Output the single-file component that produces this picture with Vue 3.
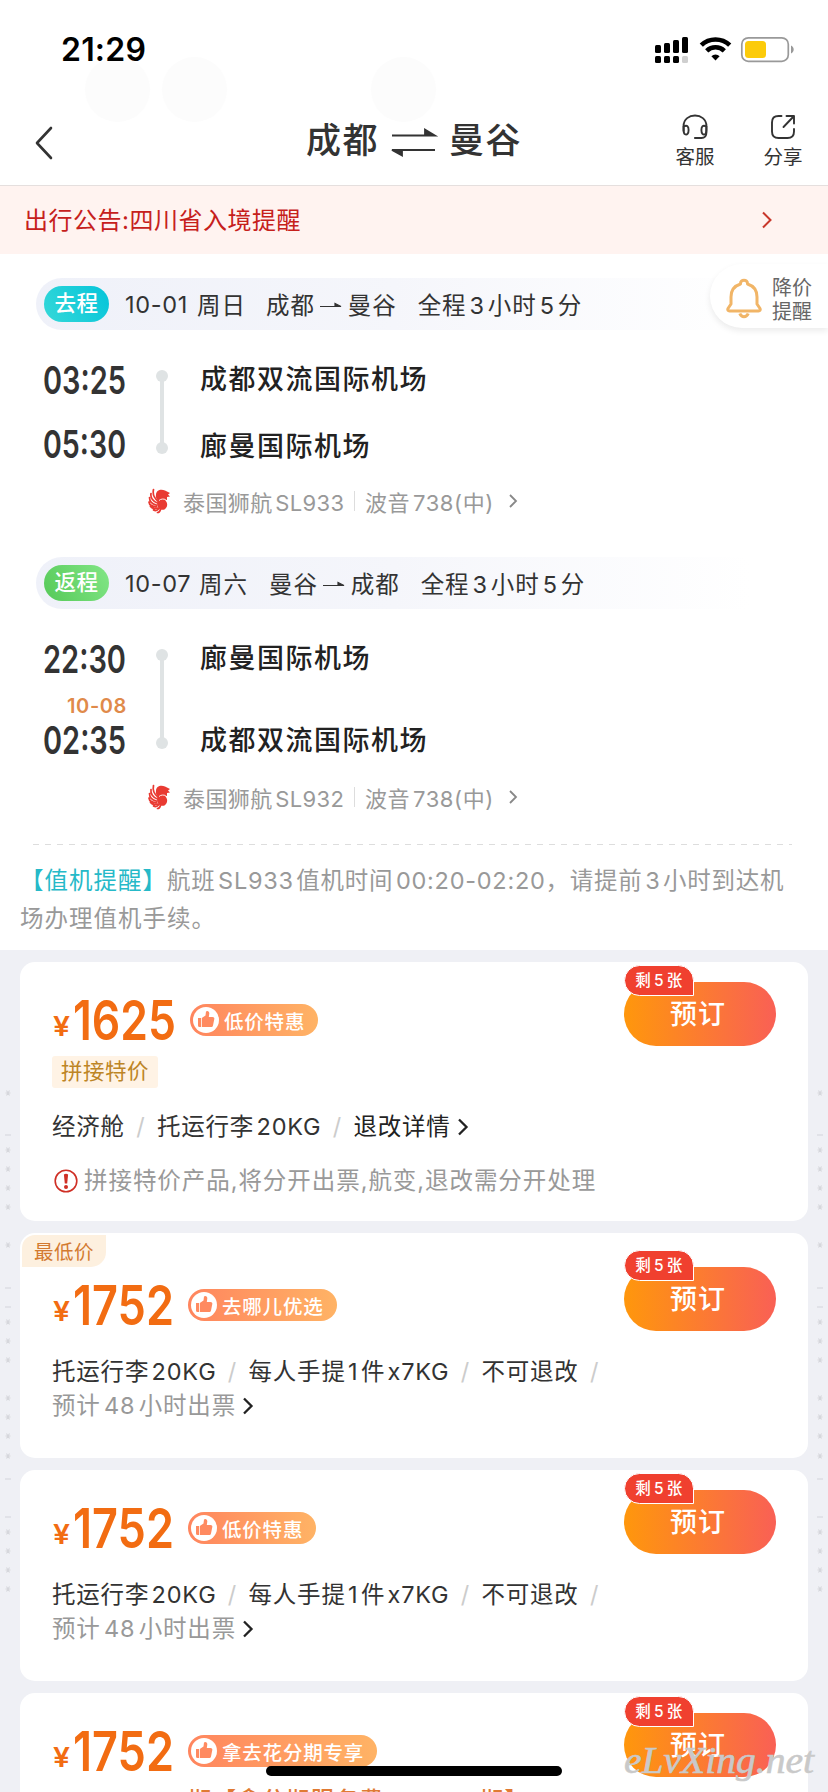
<script setup>
const legs = [
  {
    kind: 'go', label: '去程', date: '10-01', day: '周日', from: '成都', to: '曼谷', total: '全程 3 小时 5 分',
    dep: '03:25', arr: '05:30', plus: '', depPort: '成都双流国际机场', arrPort: '廊曼国际机场', flight: '泰国狮航 SL933',
  },
  {
    kind: 'back', label: '返程', date: '10-07', day: '周六', from: '曼谷', to: '成都', total: '全程 3 小时 5 分',
    dep: '22:30', arr: '02:35', plus: '10-08', depPort: '廊曼国际机场', arrPort: '成都双流国际机场', flight: '泰国狮航 SL932',
  },
]
const fares = [
  { kind: 'split', price: '1625', tag: '低价特惠', w: 103 },
  { kind: 'lowest', price: '1752', tag: '去哪儿优选', w: 101 },
  { kind: 'plain', price: '1752', tag: '低价特惠', w: 101 },
  { kind: 'last', price: '1752', tag: '拿去花分期专享', w: 101 },
]
const stars = [1093, 1150, 1169, 1188, 1207, 1245, 1322, 1341, 1360, 1398, 1417, 1436, 1456, 1532, 1551, 1570, 1589]
const dashes = [1135, 1288, 1307, 1479, 1517]
</script>

<template>
  <div class="screen">
    <i class="bubble b1"></i><i class="bubble b2"></i><i class="bubble b3"></i>
    <div class="status">
      <span class="clock">21:29</span>
      <svg class="status-icons" width="140" height="28" viewBox="0 0 140 28">
        <g fill="#000">
          <rect x="0" y="9" width="6" height="8" rx="1.5" /><rect x="9" y="7" width="6" height="10" rx="1.5" />
          <rect x="18" y="4" width="6" height="13" rx="1.5" /><rect x="27" y="1" width="6" height="16" rx="1.5" />
          <rect x="0" y="20" width="6" height="7" rx="1.5" /><rect x="9" y="20" width="6" height="7" rx="1.5" />
          <rect x="18" y="20" width="6" height="7" rx="1.5" />
        </g>
        <rect x="27" y="20" width="6" height="7" rx="1.5" fill="#cfcfcf" />
        <g fill="none" stroke="#000" stroke-width="4.6">
          <path d="M46.3 9.2a20.4 20.4 0 0 1 28.4 0" /><path d="M51.7 14.8a12.7 12.7 0 0 1 17.6 0" />
        </g>
        <path d="M56.4 20.2a5.8 5.8 0 0 1 8.2 0L60.5 24.6z" fill="#000" />
        <rect x="86.8" y="1.8" width="46.5" height="23.5" rx="6.5" fill="#fff" stroke="#999" stroke-width="1.7" />
        <rect x="90" y="5" width="21" height="17" rx="3.5" fill="#fccb0a" />
        <path d="M136 9.5c3.6 1.4 3.6 6.600 0 8z" fill="#999" />
      </svg>
    </div>
    <header class="nav">
      <svg class="back-icon" width="18" height="34" viewBox="0 0 18 34"><path d="M16 2 2 17l14 15" fill="none" stroke="#333" stroke-width="2.6" stroke-linecap="round" stroke-linejoin="round" /></svg>
      <h1 class="title">
        <span>成都</span>
        <svg width="46" height="30" viewBox="0 0 46 30"><path d="M1 8.500H44L34 2.500v6M44 23H1l10 5.500V23" fill="#333" stroke="#333" stroke-width="1.800" /></svg>
        <span>曼谷</span>
      </h1>
      <div class="action">
        <svg width="28" height="28" viewBox="0 0 28 28" fill="none" stroke="#333" stroke-width="1.9" stroke-linecap="round">
          <path d="M2.600 18V13C2.600-1 25.400-1 25.400 13V19.500c0 3.500-2 5.500-5 5.500h-6.500" />
          <path d="M2.600 13.500c3.600-1.800 5 0 5 3.500s-1.500 5.500-4 4c-1-1-1-2-1-4zM25.400 13.500c-3.600-1.800-5 0-5 3.500s1.500 5.500 4 4c1-1 1-2 1-4z" />
        </svg>
        <span>客服</span>
      </div>
      <div class="action share">
        <svg width="28" height="28" viewBox="0 0 28 28" fill="none" stroke="#333" stroke-width="1.900" stroke-linecap="round" stroke-linejoin="round">
          <path d="M12.500 3H9.500Q3 3 3 9.500v9Q3 25 9.500 25h9Q25 25 25 18.500V16M17.500 3H25v7.500M25 3 14.500 14" />
        </svg>
        <span>分享</span>
      </div>
    </header>
    <div class="notice">
      <span>出行公告:四川省入境提醒</span>
      <svg width="12" height="18" viewBox="0 0 12 18"><path d="m2 1.500 7.500 7.500L2 16.500" fill="none" stroke="#c8372b" stroke-width="2" /></svg>
    </div>

    <main class="trip">
      <aside class="alert">
        <svg width="36" height="40" viewBox="0 0 36 40" fill="none" stroke="#f1b567" stroke-width="3" stroke-linejoin="round">
          <path d="M14.500 6C14 1 22 1 21.500 6 28 8 31 13 31 19v7l3 4.500c.7 1.500 0 2.500-1.500 2.500h-29C2 33 1.300 32 2 30.500L5 26v-7c0-6 3-11 9.500-13z" />
          <path d="M13.800 35.500c1.500 4.200 6.900 4.200 8.400 0" />
        </svg>
        <div>降价<br />提醒</div>
      </aside>
      <section v-for="leg in legs" :key="leg.kind" class="leg" :class="leg.kind">
        <div class="leg-bar">
          <span class="badge">{{ leg.label }}</span>
          <span class="date">{{ leg.date }}</span>
          <span class="day">{{ leg.day }}</span>
          <span class="city">{{ leg.from }}</span>
          <svg width="24" height="10" viewBox="0 0 24 10"><path d="M1 7.500H22L16 4.500v3" fill="#333" stroke="#333" stroke-width="1.200" /></svg>
          <span class="city">{{ leg.to }}</span>
          <span class="total">{{ leg.total }}</span>
        </div>
        <div class="route">
          <div class="times">
            <svg width="88" height="46"><text class="time" x="0" y="37" textLength="83" lengthAdjust="spacingAndGlyphs">{{ leg.dep }}</text></svg>
            <span v-if="leg.plus" class="plus">{{ leg.plus }}</span>
            <svg width="88" height="46"><text class="time" x="0" y="37" textLength="83" lengthAdjust="spacingAndGlyphs">{{ leg.arr }}</text></svg>
          </div>
          <div class="track"><i></i><i></i></div>
          <div class="ports"><span>{{ leg.depPort }}</span><span>{{ leg.arrPort }}</span></div>
        </div>
        <div class="plane">
          <svg width="24" height="26" viewBox="0 0 24 26">
            <g fill="none" stroke="#e93a32" stroke-width="1.700" stroke-linecap="round">
              <path d="M5.500 1.500C4.500 6 6 10 10 13M3 5.500c-.8 4 2 8 6.500 9.500M1.500 9.500C1.500 13 4 16 8.500 17M1 14c.5 3 3.500 4.800 7.500 4.500M2.500 18.500c1.500 2 4 2.500 7 1.500M5.500 22c1.800 1 4 .5 5.500-1.500M9.500 24.500c1.500 0 2.500-1 3-3" />
            </g>
            <path d="M8 7C8 2 13 .5 17 2.500l5 2.500L20 6.500l2 2-3 .5v3l-2.500-.5c3 2.500 3.500 6 1.500 8.500-2 3-6 2-8-.5C8 16 10 14 9.500 12 8 10 7.500 9 8 7z" fill="#e93a32" />
            <path d="M11 12.500c2-2 5-1.500 6.500-1M15.500 22l-1 3" fill="none" stroke="#fff" stroke-width=".9" />
          </svg>
          <span class="flight">{{ leg.flight }}</span>
          <i class="sep"></i>
          <span class="model">波音 738(中)</span>
          <svg width="12" height="16" viewBox="0 0 12 16"><path d="m2 2 6 6-6 6" fill="none" stroke="#888" stroke-width="1.800" /></svg>
        </div>
      </section>
      <div class="rule"></div>
      <p class="checkin"><b>【值机提醒】</b><span>航班 SL933 值机时间 00:20-02:20，请提前 3 小时到达机</span><br />场办理值机手续。</p>
    </main>

    <div class="list">
      <svg class="marks" width="828" height="1792" viewBox="0 0 828 1792" stroke="#d6d7dc" stroke-width="1.100">
        <g v-for="x in [8, 820]" :key="x">
          <path v-for="y in stars" :key="y" :d="`M${x - 2.500} ${y}h5M${x - 1.500} ${y - 2.500}l3 5M${x + 1.500} ${y - 2.500}l-3 5`" />
          <path v-for="y in dashes" :key="y" :d="`M${x - 3} ${y}h6`" />
        </g>
      </svg>
      <article v-for="(f, n) in fares" :key="n" class="card" :class="f.kind">
        <span v-if="f.kind === 'lowest'" class="ribbon">最低价</span>
        <div class="top">
          <svg class="yen" width="20" height="44"><text x="1" y="38" textLength="17" lengthAdjust="spacingAndGlyphs">¥</text></svg>
          <svg class="amount" :width="f.w + 6" height="64"><text class="price" x="1" y="52" :textLength="f.w" lengthAdjust="spacingAndGlyphs">{{ f.price }}</text></svg>
          <span class="tag">
            <svg width="26" height="26" viewBox="0 0 26 26"><circle cx="13" cy="13" r="13" fill="#fff" /><path d="M5 11h3v9H6.500Q5 20 5 18.500zM8.800 11l3.700-2.500L13 4.500c1.500-1.500 3.500 0 3.300 2L15.800 10h3.700c1.500 0 2 1 1.800 2l-1.300 6.500c-.2 1-1 1.500-2 1.500H8.800z" fill="#ff8a60" /></svg>
            {{ f.tag }}
          </span>
        </div>
        <div class="book">预订<em>剩 5 张</em></div>
        <template v-if="f.kind === 'split'">
          <span class="split-tag">拼接特价</span>
          <div class="row first">
            <span>经济舱</span><i>/</i><span>托运行李 20KG</span><i>/</i><span class="strong">退改详情</span>
            <svg width="12" height="18" viewBox="0 0 12 18"><path d="m2 1.500 7.500 7.500L2 16.500" fill="none" stroke="#222" stroke-width="2.300" /></svg>
          </div>
          <div class="row warn">
            <svg width="24" height="24" viewBox="0 0 24 24"><circle cx="12" cy="12" r="10.800" fill="none" stroke="#cf2f25" stroke-width="1.600" /><path d="M9.900 5.500q2.100-1.500 4.200 0L13.200 14.500h-2.400z" fill="#cf2f25" /><circle cx="12" cy="18" r="2" fill="#cf2f25" /></svg>
            <span>拼接特价产品,将分开出票,航变,退改需分开处理</span>
          </div>
        </template>
        <template v-else-if="f.kind !== 'last'">
          <div class="row bags"><span>托运行李 20KG</span><i>/</i><span>每人手提 1 件 x7KG</span><i>/</i><span>不可退改</span><i>/</i></div>
          <div class="row eta">
            <span>预计 48 小时出票</span>
            <svg width="12" height="18" viewBox="0 0 12 18"><path d="m2 1.500 7.500 7.500L2 16.500" fill="none" stroke="#222" stroke-width="2.300" /></svg>
          </div>
        </template>
        <div v-else class="promo"><span>期【拿分期服务费</span><span>期】</span></div>
      </article>
    </div>
    <i class="home"></i>
    <svg class="mark" width="204" height="60"><text x="6" y="41" textLength="190" lengthAdjust="spacingAndGlyphs">eLvXing.net</text></svg>
  </div>
</template>

<style>
body { background: #fff; }
</style>

<style scoped>
.screen { position: relative; width: 828px; height: 1792px; overflow: hidden; background: #fff; color: #333; font-family: Inter, "Noto Sans CJK SC", sans-serif; display: flex; flex-direction: column; }
svg { display: block; flex: none; overflow: visible; }
span { white-space: nowrap; }
i, em { font-style: normal; }
.bubble { position: absolute; top: 57px; width: 65px; height: 65px; border-radius: 50%; background: #fcfcfc; }
.b1 { left: 85px; } .b2 { left: 162px; } .b3 { left: 371px; }
.status { position: relative; height: 100px; flex: none; box-sizing: border-box; padding: 36px 34px 0 61px; display: flex; justify-content: space-between; }
.clock { color: #000; font-weight: 600; font-size: 32px; letter-spacing: .2px; line-height: 28px; }
.status-icons { margin-right: -1px; }
.nav { position: relative; height: 86px; flex: none; box-sizing: border-box; border-bottom: 1px solid #e5dfde; display: flex; padding-left: 35px; }
.back-icon { margin-top: 26px; }
.title { margin: 20px 0 0 253px; width: 216px; height: 40px; display: flex; align-items: center; gap: 13px; font-size: 35px; font-weight: 500; letter-spacing: 1.500px; line-height: 40px; }
.title svg { margin: 4px -1px 0 -1px; }
.action { margin: 13px 0 0 153px; width: 40px; display: flex; flex-direction: column; align-items: center; font-size: 19.500px; line-height: 24px; gap: 4px; }
.action.share { margin-left: 48px; }
.notice { height: 68px; flex: none; background: #fff3f0; display: flex; justify-content: space-between; align-items: center; box-sizing: border-box; padding: 0 55px 0 24px; color: #c6201b; font-size: 24px; letter-spacing: .5px; }
.notice span { margin-top: -3px; }
.trip { position: relative; height: 696px; flex: none; padding: 24px 0 0; box-sizing: border-box; background: #fff; }
.alert { position: absolute; left: 710px; top: 10px; width: 118px; height: 64px; box-sizing: border-box; padding-left: 16px; border-radius: 32px 0 0 32px; background: #fff; box-shadow: 0 3px 6px rgba(0,0,0,.08); display: flex; align-items: center; gap: 10px; font-size: 20px; line-height: 24px; color: #666; z-index: 2; }
.alert div { padding-top: 8px; }
.alert svg { margin-top: 3px; }
.leg { height: 279px; display: flex; flex-direction: column; }
.leg-bar { margin-left: 36px; width: 714px; height: 52px; flex: none; border-radius: 26px 0 0 26px; background: linear-gradient(90deg, #eff1f9, #f5f6fb 50%, #fff); display: flex; align-items: center; font-size: 23.500px; letter-spacing: .9px; padding-left: 8px; box-sizing: border-box; color: #333; }
.badge { width: 65px; height: 36px; line-height: 35px; border-radius: 18px; text-align: center; color: #fff; font-size: 21.500px; font-weight: 500; letter-spacing: .5px; background: linear-gradient(60deg, #35d8d8, #05c4da); }
.leg.back .badge { background: linear-gradient(60deg, #56c958, #82e686); }
.date { margin-left: 16px; width: 72px; letter-spacing: .7px; }
.day { width: 69px; }
.leg.back .date { width: 74px; }
.leg.back .day { width: 70px; }
.leg-bar svg { margin: 0 5px 0 4px; }
.total { margin-left: 21px; word-spacing: -4.500px; }
.route { display: flex; height: 116px; margin: 30px 0 0 43px; }
.leg.back .route { height: 134px; }
.times { width: 113px; display: flex; flex-direction: column; justify-content: space-between; height: 110px; margin-top: -3px; }
.leg.back .times { height: 127px; }
.time { font: 600 38.500px Inter, sans-serif; fill: #333; }
.plus { font-size: 20px; font-weight: 600; color: #e08a4a; width: 84px; text-align: right; line-height: 14px; letter-spacing: .6px; margin: 6px 0 -6px; }
.track { width: 12px; height: 84px; margin-top: 10px; display: flex; flex-direction: column; justify-content: space-between; background: linear-gradient(#dfe3e4, #dfe3e4) center / 4px 80px no-repeat; }
.leg.back .track { height: 100px; background-size: 4px 96px; }
.track i { width: 12px; height: 12px; border-radius: 50%; background: #dfe3e4; }
.ports { margin: 4px 0 0 32px; height: 99px; display: flex; flex-direction: column; justify-content: space-between; font-size: 27px; font-weight: 500; letter-spacing: 1.500px; line-height: 32px; color: #222; }
.leg.back .ports { height: 114px; }
.plane { margin-left: 148px; height: 30px; margin-top: 10px; display: flex; align-items: center; font-size: 22px; letter-spacing: .2px; color: #999; word-spacing: -4px; }
.leg.back .plane { margin-top: 9px; }
.plane .flight { width: 171px; margin-left: 11px; letter-spacing: .4px; }
.sep { width: 1px; height: 20px; background: #ddd; margin-right: 10px; }
.model { width: 143px; letter-spacing: .6px; }
.rule { margin-left: 33px; width: 759px; height: 1px; margin-top: 8px; background: repeating-linear-gradient(90deg, #ddd 0 6px, transparent 6px 12px); }
.checkin { margin: 17px 0 0 20px; font-size: 23.500px; line-height: 38px; letter-spacing: 1px; color: #999; white-space: nowrap; }
.checkin b { font-weight: 400; color: #26b9c8; }
.checkin span { letter-spacing: .75px; word-spacing: -4.800px; }
.list { flex: none; height: 842px; box-sizing: border-box; padding: 12px 20px 0; background: #eff0f5; display: flex; flex-direction: column; gap: 12px; }
.marks { position: absolute; left: 0; top: 0; }
.card { position: relative; flex: none; height: 259px; box-sizing: border-box; padding: 36px 0 0 32px; border-radius: 15px; background: #fff; }
.lowest { height: 225px; padding-top: 50px; }
.plain { height: 211px; }
.top { display: flex; height: 44px; }
.yen text { font: 600 27px Inter, sans-serif; fill: #f26c12; }
.amount { margin-top: -10px; }
.price { font: 600 55.500px Inter, sans-serif; fill: #f26c12; }
.tag { margin: 6px 0 0 9px; height: 32px; box-sizing: border-box; padding: 0 13px 0 3px; border-radius: 16px; background: linear-gradient(90deg, #ff855e, #ffb365); color: #fff; display: flex; align-items: center; gap: 5px; font-size: 19.500px; font-weight: 500; letter-spacing: .8px; }
.book { position: absolute; right: 32px; top: 20px; width: 152px; height: 64px; line-height: 65px; border-radius: 32px; text-align: center; text-indent: -4px; color: #fff; font-size: 27px; font-weight: 500; letter-spacing: 1px; background: linear-gradient(90deg, #ff970c, #f96055); }
.lowest .book { top: 34px; }
.book em { position: absolute; left: 0; top: -17px; width: 68px; height: 29px; line-height: 30px; border: 1.500px solid #fff; border-radius: 16px 16px 0 16px; background: #f0402f; font-size: 15.500px; letter-spacing: .5px; text-indent: 0; word-spacing: -2px; }
.split-tag { display: block; margin-top: 14px; width: 106px; height: 32px; line-height: 31px; text-align: center; border-radius: 3px; background: #fff3e5; color: #bd8526; font-size: 21.500px; letter-spacing: .5px; }
.row { display: flex; height: 34px; line-height: 34px; align-items: center; font-size: 23.500px; letter-spacing: .8px; word-spacing: -5px; }
.row i { width: 32px; text-align: center; color: #ccc; }
.first { margin-top: 22px; }
.strong { color: #222; }
.row svg { margin-left: 6px; }
.warn { margin-top: 20px; color: #999; letter-spacing: .95px; }
.warn svg { margin: 0 6px 0 2px; }
.bags { margin-top: 28px; }
.eta { color: #999; word-spacing: -4px; }
.ribbon { position: absolute; left: 2px; top: 2px; width: 84px; height: 32px; line-height: 34px; text-align: center; border-radius: 13px 0 15px 0; background: #fdf0df; color: #d37a30; font-size: 19.500px; letter-spacing: .5px; }
.promo { display: flex; gap: 96px; margin: 11px 0 0 136px; font-size: 23.500px; letter-spacing: 1px; line-height: 34px; font-weight: 500; color: #e07a33; }
.home { position: absolute; left: 266px; top: 1766px; width: 296px; height: 10px; border-radius: 5px; background: #000; }
.mark { position: absolute; left: 618px; top: 1732px; }
.mark text { font: italic 400 38px "Liberation Serif", serif; fill: #c9c9c9; stroke: #c9c9c9; stroke-width: .6px; }
</style>
